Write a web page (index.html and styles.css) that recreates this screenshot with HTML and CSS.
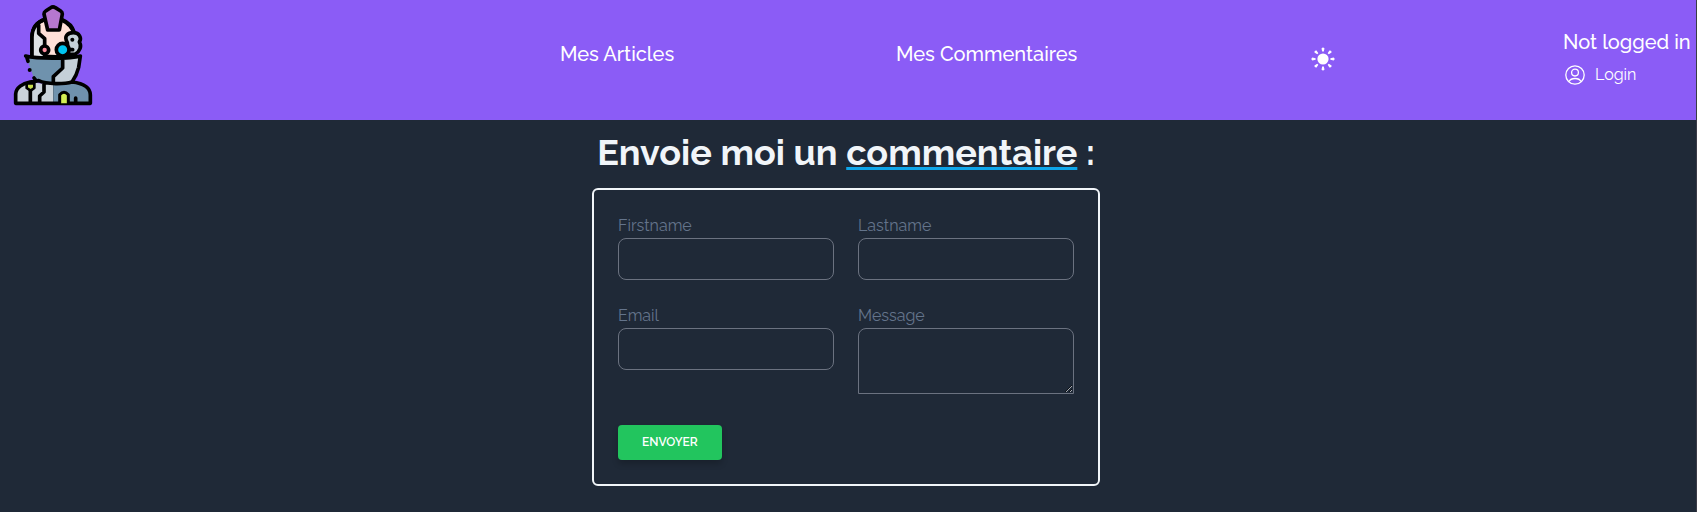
FILE: index.html
```html
<!DOCTYPE html>
<html lang="fr">
<head>
<meta charset="utf-8">
<meta name="viewport" content="width=device-width, initial-scale=1">
<title>Commentaire</title>
<link rel="stylesheet" href="styles.css">
</head>
<body>
<header class="topbar">
  <a class="brand" href="#" aria-label="Accueil">
    <svg class="logo" viewBox="40 12 238 306" fill="none" stroke="#000" stroke-width="11" stroke-linecap="round" stroke-linejoin="round">
      <path d="M96 168V112C96 84 112 66 136 58L185 60C204 68 218 84 224 104V172Z" fill="#ffe0d8"/>
      <path d="M96 168V112C96 96 104 84 116 76V100L134 116V168Z" fill="#dfe3e6" stroke="none"/>
      <path d="M96 168V112C96 84 112 66 136 58M116 76V100L134 116V134M134 164V172M185 58C204 66 218 80 222 96"/>
      <path d="M202 128C190 108 204 98 220 98C238 98 246 114 238 126C246 138 240 154 226 162L206 164Z" fill="#c5d0d8"/>
      <path d="M132 42Q132 36 137 33L152 23Q159 18 166 23L182 33Q187 36 187 42L178 90H143Z" fill="#b677cf"/>
      <circle cx="134" cy="150" r="12" fill="#ff8fa0"/>
      <circle cx="188" cy="149" r="19" fill="#00c3ef"/>
      <circle cx="217" cy="119" r="6" fill="#000" stroke="none"/>
      <path d="M210 149H218"/>
      <path d="M78 168C110 176 205 178 241 168L236 200L216 246C190 252 140 252 104 240L84 186Z" fill="#6f92ad" stroke="none"/>
      <path d="M188 178L241 168L236 200L216 246L160 248V228L188 204Z" fill="#c5d0d8" stroke="none"/>
      <path d="M77 168C110 176 205 178 241 168L236 202Q230 226 216 246M80 170L84 184M188 178V204L160 230V308"/>
      <path d="M47 310V282C47 264 70 250 92 246C140 254 140 252 160 248V310Z" fill="#cbd3da" stroke="none"/>
      <path d="M160 248C185 253 200 250 218 245C250 250 271 262 271 285V310H160Z" fill="#6f92ad" stroke="none"/>
      <path d="M47 310V282C48 263 68 250 90 246Q105 244 116 242C140 254 195 252 216 246C250 250 271 262 271 285V310ZM91 272V308M132 252V276L119 288V308M227 294V306M102 234L108 242"/>
      <path d="M80 250H103V264L92 272L80 264Z" fill="#c8de4c" stroke-width="8"/>
      <path d="M179 310V284Q192 270 205 284V310" fill="#d3ee54" stroke-width="9"/>
      <circle cx="89" cy="210" r="6" fill="#000" stroke="none"/>
    </svg>
  </a>
  <a class="nav-link" href="#">Mes Articles</a>
  <a class="nav-link" href="#">Mes Commentaires</a>
  <button class="theme" type="button" aria-label="Changer le thème">
    <svg viewBox="0 0 24 24" width="24" height="24" fill="#fff">
      <circle cx="12" cy="12" r="5.6"/>
      <g id="rays">
        <path id="ray" d="M10.5 1.4Q12-.6 13.5 1.4L12.8 4.6H11.2Z"/>
        <use href="#ray" transform="rotate(45 12 12)"/>
        <use href="#ray" transform="rotate(90 12 12)"/>
        <use href="#ray" transform="rotate(135 12 12)"/>
      </g>
      <use href="#rays" transform="rotate(180 12 12)"/>
    </svg>
  </button>
  <div class="account">
    <p class="status">Not logged in</p>
    <a class="login" href="#">
      <svg viewBox="0 0 20 20" width="20" height="20" fill="none" stroke="#fff" stroke-width="1.3">
        <circle cx="10" cy="10" r="9.2"/>
        <circle cx="10" cy="7.6" r="3.4"/>
        <path d="M4 16.5Q5.5 13.5 10 13.5T16 16.5"/>
      </svg>
      <span>Login</span>
    </a>
  </div>
</header>
<main class="content">
  <h1 class="title">Envoie moi un <span class="accent">commentaire</span> :</h1>
  <form class="card">
    <div class="field">
      <label for="firstname">Firstname</label>
      <input id="firstname" type="text">
    </div>
    <div class="field">
      <label for="lastname">Lastname</label>
      <input id="lastname" type="text">
    </div>
    <div class="field">
      <label for="email">Email</label>
      <input id="email" type="email">
    </div>
    <div class="field">
      <label for="message">Message</label>
      <textarea id="message"></textarea>
    </div>
    <button class="submit" type="submit">ENVOYER</button>
  </form>
</main>
</body>
</html>
```
FILE: styles.css
```css
*, *::before, *::after { box-sizing: border-box; }

body {
  margin: 0;
  min-height: 100vh;
  background: #1f2937;
  border-right: 1px solid #3b3b46;
  color: #fff;
  font: 16px/24px Raleway, "Open Sans", sans-serif;
}

a { color: inherit; text-decoration: none; }

.topbar {
  display: grid;
  grid-template-columns: 560fr 336fr 414fr 253fr 133px;
  align-items: center;
  height: 120px;
  background: #8b5cf6;
}

.brand { align-self: start; padding: 4px 0 0 13px; }
.logo { display: block; width: 80px; height: 102px; }

.nav-link, .status {
  font-size: 20px;
  line-height: 28px;
  font-weight: 500;
  white-space: nowrap;
}
.nav-link { padding-bottom: 12px; }

.theme {
  justify-self: start;
  padding: 0 0 2px 1px;
  border: 0;
  background: none;
  line-height: 0;
}

.account { padding-bottom: 5px; }
.status { margin: 0 0 7px; }
.login { display: flex; align-items: center; gap: 10px; padding-left: 2px; }

.content {
  display: flex;
  flex-direction: column;
  align-items: center;
  padding: 12px 4px 24px 0;
}

.title {
  margin: 0 0 16px;
  color: #f1f5f9;
  font-size: 36px;
  line-height: 40px;
  font-weight: 700;
  white-space: nowrap;
}

.accent {
  text-decoration: underline #0ea5e9 3px;
  text-underline-offset: 2px;
  text-decoration-skip-ink: none;
}

.card {
  display: grid;
  grid-template-columns: 1fr 1fr;
  gap: 24px;
  width: 100%;
  max-width: 508px;
  padding: 24px;
  border: 2px solid #f1f5f9;
  border-radius: 6px;
}

.field label { display: block; color: #64748b; }

.field input, .field textarea {
  display: block;
  width: 100%;
  padding: 8px 12px;
  border: 1px solid #6b7280;
  border-radius: 8px;
  background: transparent;
  color: inherit;
  font: inherit;
}
.field input { height: 42px; }
.field textarea {
  height: 66px;
  margin-bottom: 7px;
  border-radius: 8px 8px 0 0;
}

.submit {
  justify-self: start;
  padding: 8px 24px 9px;
  border: 0;
  border-radius: 4px;
  background: #22c55e;
  box-shadow: 0 4px 6px rgba(0, 0, 0, .2);
  color: #fff;
  font: 600 12px/18px Raleway, "Open Sans", sans-serif;
}
```
